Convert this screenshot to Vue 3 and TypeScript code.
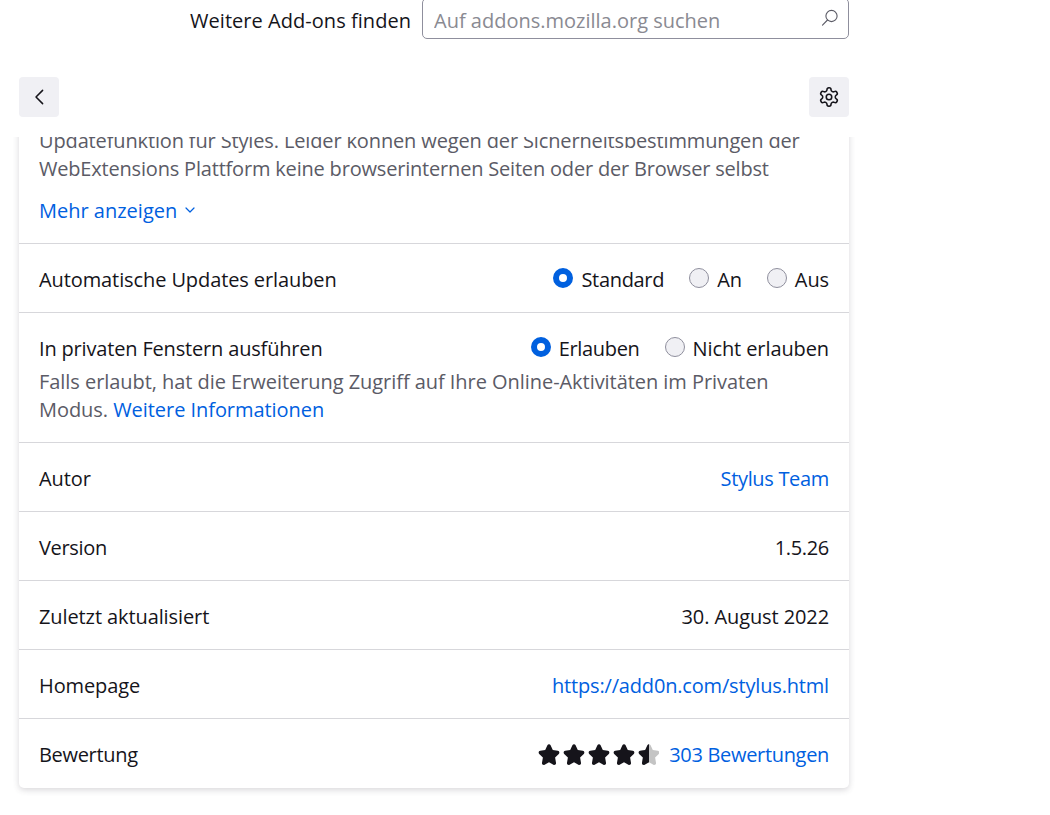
<script setup lang="ts">
const updateOptions = [
  { label: 'Standard', checked: true, tight: true },
  { label: 'An', checked: false, tight: false },
  { label: 'Aus', checked: false, tight: false },
]
const privateOptions = [
  { label: 'Erlauben', checked: true, tight: true },
  { label: 'Nicht erlauben', checked: false, tight: false },
]
const stars = [1, 2, 3, 4]
</script>

<template>
  <div class="page">
    <header class="search-row">
      <label class="search-label" for="s">Weitere Add-ons finden</label>
      <div class="search-box">
        <input id="s" class="search-input" type="text" placeholder="Auf addons.mozilla.org suchen" />
        <svg class="search-icon" width="20" height="20" viewBox="0 0 20 20" fill="none" stroke="#5b5b66" stroke-width="1.1">
          <circle cx="11.5" cy="8" r="5.6" />
          <path d="M7.5 12 2.5 17.2" stroke-linecap="round" />
        </svg>
      </div>
    </header>

    <nav class="tool-row">
      <button class="icon-btn" type="button" aria-label="Zurück">
        <svg width="20" height="20" viewBox="0 0 20 20" fill="none" stroke="#15141a" stroke-width="1.5" stroke-linecap="round" stroke-linejoin="round">
          <path d="M13.6 3.4 7 10l6.6 6.6" />
        </svg>
      </button>
      <button class="icon-btn" type="button" aria-label="Einstellungen">
        <svg width="22" height="22" viewBox="0 0 24 24" fill="none" stroke="#15141a" stroke-width="1.7" stroke-linecap="round" stroke-linejoin="round">
          <path d="M12.22 2h-.44a2 2 0 0 0-2 2v.18a2 2 0 0 1-1 1.73l-.43.25a2 2 0 0 1-2 0l-.15-.08a2 2 0 0 0-2.73.73l-.22.38a2 2 0 0 0 .73 2.73l.15.1a2 2 0 0 1 1 1.72v.51a2 2 0 0 1-1 1.74l-.15.09a2 2 0 0 0-.73 2.73l.22.38a2 2 0 0 0 2.73.73l.15-.08a2 2 0 0 1 2 0l.43.25a2 2 0 0 1 1 1.73V20a2 2 0 0 0 2 2h.44a2 2 0 0 0 2-2v-.18a2 2 0 0 1 1-1.73l.43-.25a2 2 0 0 1 2 0l.15.08a2 2 0 0 0 2.73-.73l.22-.39a2 2 0 0 0-.73-2.73l-.15-.08a2 2 0 0 1-1-1.74v-.5a2 2 0 0 1 1-1.74l.15-.09a2 2 0 0 0 .73-2.73l-.22-.38a2 2 0 0 0-2.73-.73l-.15.08a2 2 0 0 1-2 0l-.43-.25a2 2 0 0 1-1-1.73V4a2 2 0 0 0-2-2z" />
          <circle cx="12" cy="12" r="3" />
        </svg>
      </button>
    </nav>

    <div class="scroller">
      <section class="card">
        <div class="desc-block">
          <p class="desc"><span class="line line-a">Updatefunktion für Styles. Leider können wegen der Sicherheitsbestimmungen der</span> <span class="line line-b">WebExtensions Plattform keine browserinternen Seiten oder der Browser selbst</span></p>
          <a class="link more" href="#">Mehr anzeigen
            <svg width="12" height="12" viewBox="0 0 12 12" fill="none" stroke="#0060df" stroke-width="1.2" stroke-linecap="round" stroke-linejoin="round">
              <path d="M2 4l4 4 4-4" />
            </svg>
          </a>
        </div>

        <div class="row">
          <span>Automatische Updates erlauben</span>
          <div class="radios">
            <label v-for="o in updateOptions" :key="o.label" class="radio" :class="{ tight: o.tight }">
              <input type="radio" name="updates" :checked="o.checked" />{{ o.label }}
            </label>
          </div>
        </div>

        <div class="row-tall">
          <div class="row-head">
            <span class="mid">In privaten Fenstern ausführen</span>
            <div class="radios">
              <label v-for="o in privateOptions" :key="o.label" class="radio" :class="{ tight: o.tight }">
                <input type="radio" name="private" :checked="o.checked" />{{ o.label }}
              </label>
            </div>
          </div>
          <p class="desc note">Falls erlaubt, hat die Erweiterung Zugriff auf Ihre Online-Aktivitäten im Privaten Modus. <a class="link" href="#">Weitere Informationen</a></p>
        </div>

        <div class="row"><span>Autor</span><a class="link tight" href="#">Stylus Team</a></div>
        <div class="row"><span class="tight">Version</span><span class="tight">1.5.26</span></div>
        <div class="row"><span>Zuletzt aktualisiert</span><span>30. August 2022</span></div>
        <div class="row"><span>Homepage</span><a class="link mid" href="#">https://add0n.com/stylus.html</a></div>
        <div class="row row-last">
          <span class="tight">Bewertung</span>
          <div class="rating">
            <svg class="stars" width="121" height="22" viewBox="0 0 121 22">
              <defs>
                <path id="star" d="M11 1.2c.7 0 1.3.4 1.6 1.1l2.2 4.8 5 .7c1.5.2 2.1 2 1 3.1l-3.7 3.7.9 5.2c.3 1.5-1.3 2.6-2.6 1.9L11 19.3l-4.4 2.4c-1.3.7-2.9-.4-2.6-1.9l.9-5.2-3.7-3.7c-1.1-1.1-.5-2.9 1-3.1l5-.7 2.2-4.8c.3-.7.9-1.1 1.6-1.1z" />
                <clipPath id="half"><rect x="0" y="0" width="11" height="22" /></clipPath>
              </defs>
              <use v-for="s in stars" :key="s" href="#star" :x="(s - 1) * 25" fill="#15141a" />
              <g transform="translate(100 0)">
                <use href="#star" fill="#c4c4c4" />
                <use href="#star" fill="#15141a" clip-path="url(#half)" />
              </g>
            </svg>
            <a class="link tight" href="#">303 Bewertungen</a>
          </div>
        </div>
      </section>
    </div>
  </div>
</template>

<style>
html, body { margin: 0; background: #fff; }
</style>

<style scoped>
.page {
  width: 1050px;
  height: 815px;
  overflow: hidden;
  font-family: "Open Sans", "Noto Sans", sans-serif;
  font-size: 20px;
  color: #15141a;
  background: #fff;
}
.search-row {
  width: 849px;
  height: 39px;
  display: flex;
  justify-content: flex-end;
  align-items: flex-end;
  gap: 11px;
}
.search-label { line-height: 36px; letter-spacing: 0.04px; }
.search-box {
  position: relative;
  width: 427px;
  height: 41px;
  flex: none;
  box-sizing: border-box;
  border: 1px solid #8f8f9d;
  border-radius: 5px;
  margin-top: -2px;
}
.search-input {
  width: 100%;
  height: 100%;
  box-sizing: border-box;
  border: 0;
  outline: 0;
  background: transparent;
  padding: 4px 40px 0 11px;
  font: inherit;
  color: #15141a;
}
.search-input::placeholder { color: #8a8a92; opacity: 1; }
.search-icon { position: absolute; right: 8px; top: 9px; }
.tool-row {
  box-sizing: border-box;
  width: 868px;
  padding: 38px 19px 20px;
  display: flex;
  justify-content: space-between;
}
.icon-btn {
  width: 40px;
  height: 40px;
  padding: 0;
  border: 0;
  border-radius: 4px;
  background: #f0f0f4;
  display: flex;
  align-items: center;
  justify-content: center;
}
.scroller {
  width: 868px;
  height: 678px;
  overflow: hidden;
  box-sizing: border-box;
  padding: 0 19px;
}
.card {
  margin-top: -100px;
  background: #fff;
  border-radius: 5px;
  box-shadow: 0 2px 6px rgba(58, 57, 68, 0.2);
  letter-spacing: -0.1px;
}
.desc-block { padding: 90px 20px 18px; }
p { margin: 0; }
.desc { color: #5b5b66; line-height: 28px; }
.note { letter-spacing: -0.05px; }
.line { display: block; }
.line-a { letter-spacing: -0.14px; }
.line-b { letter-spacing: -0.19px; }
.link { color: #0060df; text-decoration: none; }
.more { display: inline-flex; align-items: center; gap: 7px; margin-top: 14px; line-height: 28px; letter-spacing: 0; }
.more svg { margin-top: -3px; }
.tight { letter-spacing: -0.32px; }
.mid { letter-spacing: -0.17px; }
.row,
.row-tall {
  border-top: 1px solid #d7d7db;
  padding: 0 20px;
}
.row {
  height: 68px;
  display: flex;
  justify-content: space-between;
  align-items: center;
}
.row-last { height: 69px; }
.row-tall { padding-top: 21px; padding-bottom: 18px; }
.row-head {
  display: flex;
  justify-content: space-between;
  align-items: center;
  height: 28px;
  margin-bottom: 6px;
}
.row > span,
.row > a,
.row > .rating,
.row > .radios { position: relative; top: 1px; }
.radios { display: flex; gap: 25px; }
.radio { display: inline-flex; align-items: center; gap: 8px; }
input[type="radio"] {
  appearance: none;
  width: 20px;
  height: 20px;
  margin: 0 0 2px;
  box-sizing: border-box;
  border: 1px solid #8f8f9d;
  border-radius: 50%;
  background: #f0f0f4;
}
input[type="radio"]:checked {
  border: 6px solid #0060df;
  background: #fff;
}
.rating { display: flex; align-items: center; gap: 10px; }
.stars { display: block; margin: 0 0 2px -1px; }
</style>
